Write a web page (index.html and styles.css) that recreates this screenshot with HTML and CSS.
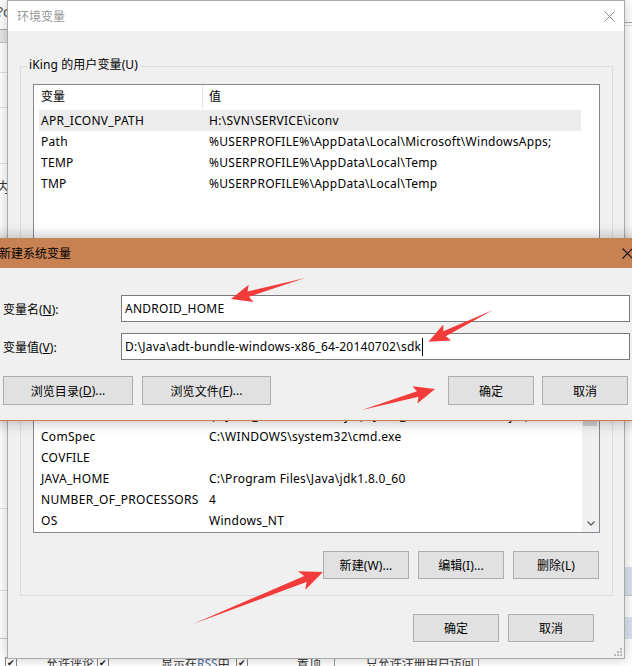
FILE: index.html
```html
<!DOCTYPE html>
<html lang="zh-CN">
<head>
<meta charset="utf-8">
<title>环境变量</title>
<link rel="stylesheet" href="styles.css">
</head>
<body>
<div class="desktop">
  <div class="page">
    <div class="strip strip-left">
      <div class="l-top"><span class="l-q">?c</span></div>
      <div class="rule rule-dark"></div>
      <div class="l-band"></div>
      <div class="rule rule-mid"></div>
      <div class="blank h29"></div>
      <div class="rule rule-light"></div>
      <div class="blank h34"></div>
      <div class="rule rule-light"></div>
      <div class="blank h55"></div>
      <div class="rule rule-light"></div>
      <div class="blank h12"></div>
      <div class="l-char">内</div>
      <div class="blank h310"></div>
      <div class="rule rule-light"></div>
      <div class="blank h81"></div>
      <div class="rule rule-light"></div>
      <div class="blank h47"></div>
      <div class="rule rule-mid"></div>
    </div>
    <div class="strip strip-right">
      <div class="blank h22"></div>
      <div class="rule rule-dark"></div>
      <div class="blank h2"></div>
      <div class="rule rule-light"></div>
      <div class="blank h541"></div>
      <div class="r-blue h28"></div>
      <div class="rule rule-mid"></div>
      <div class="blank h21"></div>
      <div class="r-blue h22"></div>
    </div>
    <div class="bottom-row">
      <span class="cb cb1">✔</span>
      <span class="bt bt1">允许评论</span>
      <span class="cb cb2">✔</span>
      <span class="bt bt2">显示在<span class="rss">RSS</span>中</span>
      <span class="cb cb3">✔</span>
      <span class="bt bt3">置顶</span>
      <span class="bt-box">只允许注册用户访问</span>
    </div>
  </div>

  <div class="win env">
    <div class="titlebar env-title">
      <span class="title-text">环境变量</span>
      <svg class="close close-gray" width="11" height="11" viewBox="0 0 11 11"><path d="M0.5 0.5L10.5 10.5M10.5 0.5L0.5 10.5"/></svg>
    </div>
    <div class="env-body">
      <div class="group group-user">
        <div class="legend">iKing 的用户变量(U)</div>
        <div class="list list-user">
          <div class="list-main">
            <div class="list-head"><div class="hc1">变量</div><div class="hc2">值</div></div>
            <div class="row selected"><div class="c1">APR_ICONV_PATH</div><div class="c2">H:\SVN\SERVICE\iconv</div></div>
            <div class="row"><div class="c1">Path</div><div class="c2">%USERPROFILE%\AppData\Local\Microsoft\WindowsApps;</div></div>
            <div class="row"><div class="c1">TEMP</div><div class="c2">%USERPROFILE%\AppData\Local\Temp</div></div>
            <div class="row"><div class="c1">TMP</div><div class="c2">%USERPROFILE%\AppData\Local\Temp</div></div>
          </div>
          <div class="list-gutter"></div>
        </div>
        <div class="btn-row">
          <div class="btn">新建(N)...</div>
          <div class="btn">编辑(E)...</div>
          <div class="btn">删除(D)</div>
        </div>
      </div>
      <div class="group group-sys">
        <div class="legend">系统变量(S)</div>
        <div class="list list-sys">
          <div class="list-main">
            <div class="list-head"><div class="hc1">变量</div><div class="hc2">值</div></div>
            <div class="row"><div class="c1">APR_ICONV_PATH</div><div class="c2">H:\SVN\SERVICE\iconv</div></div>
            <div class="row"><div class="c1">asl.log</div><div class="c2">Destination=file</div></div>
            <div class="row"><div class="c1">CLASSPATH</div><div class="c2">.;%JAVA_HOME%\lib\dt.jar;%JAVA_HOME%\lib\tools.jar;</div></div>
            <div class="row"><div class="c1">ComSpec</div><div class="c2">C:\WINDOWS\system32\cmd.exe</div></div>
            <div class="row"><div class="c1">COVFILE</div><div class="c2"></div></div>
            <div class="row"><div class="c1">JAVA_HOME</div><div class="c2">C:\Program Files\Java\jdk1.8.0_60</div></div>
            <div class="row"><div class="c1">NUMBER_OF_PROCESSORS</div><div class="c2">4</div></div>
            <div class="row"><div class="c1">OS</div><div class="c2">Windows_NT</div></div>
          </div>
          <div class="scrollbar">
            <div class="sb-btn"></div>
            <div class="sb-thumb"></div>
            <div class="sb-track"></div>
            <div class="sb-btn sb-down"><svg width="8" height="5" viewBox="0 0 8 5"><path d="M0.5 0.5L4 4L7.5 0.5"/></svg></div>
          </div>
        </div>
        <div class="btn-row">
          <div class="btn">新建(W)...</div>
          <div class="btn">编辑(I)...</div>
          <div class="btn">删除(L)</div>
        </div>
      </div>
      <div class="env-foot">
        <div class="btn">确定</div>
        <div class="btn">取消</div>
      </div>
      <svg class="grip" width="9" height="9" viewBox="0 0 9 9"><rect x="7" y="1" width="2" height="2"/><rect x="4" y="4" width="2" height="2"/><rect x="7" y="4" width="2" height="2"/><rect x="1" y="7" width="2" height="2"/><rect x="4" y="7" width="2" height="2"/><rect x="7" y="7" width="2" height="2"/></svg>
    </div>
  </div>

  <div class="win newvar">
    <div class="titlebar nv-title">
      <span class="nv-title-text">新建系统变量</span>
      <svg class="close close-black" width="11" height="11" viewBox="0 0 11 11"><path d="M0.5 0.5L10.5 10.5M10.5 0.5L0.5 10.5"/></svg>
    </div>
    <div class="nv-body">
      <div class="form-row">
        <div class="form-label">变量名(<u>N</u>):</div>
        <div class="input">ANDROID_HOME</div>
      </div>
      <div class="form-row">
        <div class="form-label">变量值(<u>V</u>):</div>
        <div class="input">D:\Java\adt-bundle-windows-x86_64-20140702\sdk<span class="caret"></span></div>
      </div>
      <div class="nv-buttons">
        <div class="btn btn-browse-dir">浏览目录(<u>D</u>)...</div>
        <div class="btn btn-browse-file">浏览文件(<u>F</u>)...</div>
        <div class="btn btn-ok">确定</div>
        <div class="btn btn-cancel">取消</div>
      </div>
    </div>
  </div>

  <svg class="annotations" width="632" height="666" viewBox="0 0 632 666">
    <g transform="translate(305 278) rotate(164.16)"><polygon points="0,0 59,-2.8 56,-9 77,0 56,9 59,2.8"/></g>
    <g transform="translate(493 310) rotate(153.8)"><polygon points="0,0 54,-2.8 51,-9 72,0 51,9 54,2.8"/></g>
    <g transform="translate(362 410) rotate(-16.05)"><polygon points="0,0 58,-2.8 55,-9 76,0 55,9 58,2.8"/></g>
    <g transform="translate(193 624) rotate(-21.8)"><polygon points="0,0 121,-3.2 117,-10 140,0 117,10 121,3.2"/></g>
  </svg>
</div>
</body>
</html>
```

FILE: styles.css
```css
* { box-sizing: border-box; margin: 0; padding: 0; }
html, body { width: 632px; height: 666px; overflow: hidden; }
body {
  background: #fff;
  font-family: "Noto Sans", "Noto Sans CJK SC", sans-serif;
  font-size: 12px;
  color: #000;
}
u { text-decoration: underline; text-underline-offset: 1px; }

.desktop { position: relative; width: 632px; height: 666px; overflow: hidden; }

/* background web page */
.page {
  display: grid;
  grid-template-columns: 7px 1fr 7px;
  grid-template-rows: 656px 10px;
  height: 666px;
  background: #fff;
}
.strip { display: flex; flex-direction: column; }
.strip-left { grid-column: 1; grid-row: 1; }
.strip-right { grid-column: 3; grid-row: 1; }
.rule { height: 1px; flex: none; }
.rule-dark { background: #a8a8a8; }
.rule-mid { background: #c8c8c8; }
.rule-light { background: #e0e0e0; }
.blank { flex: none; }
.h2 { height: 2px; } .h12 { height: 12px; } .h21 { height: 21px; } .h22 { height: 22px; }
.h28 { height: 28px; } .h29 { height: 29px; } .h34 { height: 34px; } .h47 { height: 47px; }
.h55 { height: 55px; } .h81 { height: 81px; } .h310 { height: 310px; } .h541 { height: 541px; }
.l-top { height: 29px; flex: none; font-size: 14px; line-height: 24px; color: #555; white-space: nowrap; }
.l-q { margin-left: -3px; }
.l-band { height: 12px; flex: none; background: #e6e6e6; }
.l-char { height: 22px; flex: none; font-size: 14px; line-height: 22px; margin-left: -4px; color: #333; white-space: nowrap; }
.r-blue { flex: none; background: #dae3ee; }

.bottom-row {
  grid-column: 1 / 4; grid-row: 2;
  display: flex; align-items: flex-start;
  font-size: 12px; line-height: 16px; color: #333; white-space: nowrap;
}
.cb {
  flex: none; width: 12px; height: 12px; margin-top: 1px;
  border: 1px solid #8a8a8a; background: #fff;
  font-size: 9px; line-height: 10px; text-align: center; color: #222;
}
.cb1 { margin-left: 5px; }
.bt1 { margin-left: 29px; }
.cb2 { margin-left: 3px; }
.bt2 { margin-left: 52px; }
.rss { color: #4a6a9a; }
.cb3 { margin-left: 6px; }
.bt3 { margin-left: 49px; }
.bt-box {
  margin-left: 13px; width: 145px; height: 12px;
  border-left: 1px solid #999; border-right: 1px solid #999;
  padding-left: 31px;
}

/* windows */
.win { position: absolute; display: flex; flex-direction: column; }
.titlebar { height: 30px; flex: none; display: flex; align-items: center; white-space: nowrap; }
.close { margin-left: auto; flex: none; }
.close path { fill: none; stroke-width: 1; }
.close-gray path { stroke: #8a8a8a; }
.close-black path { stroke: #111; stroke-width: 1.1; }

.env {
  left: 7px; top: 0; width: 618px; height: 659px;
  border: 1px solid #aaa; background: #f0f0f0;
  box-shadow: 0 0 12px rgba(0,0,0,.22);
}
.env-title { background: #fff; padding: 0 9px 0 9px; }
.title-text { color: #999; }
.env-body { flex: 1; display: flex; flex-direction: column; position: relative; }

.group { flex: none; width: 593px; margin-left: 12px; padding: 0 12px 16px; border: 1px solid #dcdcdc; }
.group-user { margin-top: 35px; }
.group-sys { margin-top: 11px; }
.legend {
  height: 18px; line-height: 18px; margin: -11px 0 0 -6px; padding: 0 2px;
  background: #f0f0f0; width: max-content; letter-spacing: 0.1px;
}
.list { margin-top: 10px; border: 1px solid #828790; background: #fff; display: flex; overflow: hidden; }
.list-user { height: 161px; }
.list-sys { height: 196px; }
.list-main { flex: 1; min-width: 0; overflow: hidden; }
.list-gutter { width: 17px; flex: none; }
.list-head { display: flex; height: 24px; line-height: 24px; }
.hc1 { width: 169px; flex: none; padding-left: 7px; border-right: 1px solid #e5e5e5; }
.hc2 { padding-left: 6px; }
.row { display: flex; height: 21px; line-height: 21px; margin: 0 1px 0 5px; white-space: nowrap; letter-spacing: 0.28px; }
.list-head + .row { margin-top: 1px; }
.row.selected { background: #ececec; }
.c1 { width: 164px; flex: none; padding-left: 2px; }
.c2 { padding-left: 6px; }

.scrollbar { width: 17px; flex: none; background: #f0f0f0; display: flex; flex-direction: column; }
.sb-btn { height: 17px; flex: none; display: flex; align-items: center; justify-content: center; }
.sb-thumb { height: 71px; flex: none; margin: 0 2px 0 1px; background: #cdcdcd; }
.sb-track { flex: 1; }
.sb-down path { fill: none; stroke: #606060; stroke-width: 1.3; }

.btn {
  flex: none; width: 86px; height: 28px;
  border: 1px solid #adadad; background: #e1e1e1;
  display: flex; align-items: center; justify-content: center;
  white-space: nowrap; color: #000; letter-spacing: 0.1px;
}
.btn-row { display: flex; justify-content: flex-end; gap: 9px; margin-top: 18px; padding-right: 1px; }
.env-foot { display: flex; justify-content: flex-end; gap: 9px; margin-top: 18px; padding-right: 30px; }
.grip { position: absolute; right: 2px; bottom: 2px; }
.grip rect { fill: #b8b8b8; }

/* new system variable dialog */
.newvar {
  left: -10px; top: 238px; width: 652px; height: 183px;
  border: 1px solid #c88153; border-top: 0;
  background: #f0f0f0;
  box-shadow: 0 0 14px rgba(0,0,0,.3);
}
.nv-title { background: #c88153; padding: 0 8px; }
.nv-body { flex: 1; padding: 27px 13px 0 12px; }
.form-row { display: flex; align-items: center; height: 27px; }
.form-row + .form-row { margin-top: 11px; }
.form-label { width: 118px; flex: none; white-space: nowrap; }
.input {
  width: 509px; height: 27px; flex: none;
  border: 1px solid #7a7a7a; background: #fff;
  padding-left: 3px; display: flex; align-items: center; white-space: nowrap;
  letter-spacing: 0.25px;
}
.caret { width: 1px; height: 18px; background: #000; margin-left: 1px; }
.nv-buttons { display: flex; margin-top: 16px; }
.nv-buttons .btn { height: 29px; }
.btn-browse-dir { width: 130px; }
.btn-browse-file { width: 129px; margin-left: 9px; }
.btn-ok { margin-left: auto; }
.btn-cancel { margin-left: 8px; }

.annotations { position: absolute; left: 0; top: 0; pointer-events: none; }
.annotations polygon { fill: #f23b3b; }
```
